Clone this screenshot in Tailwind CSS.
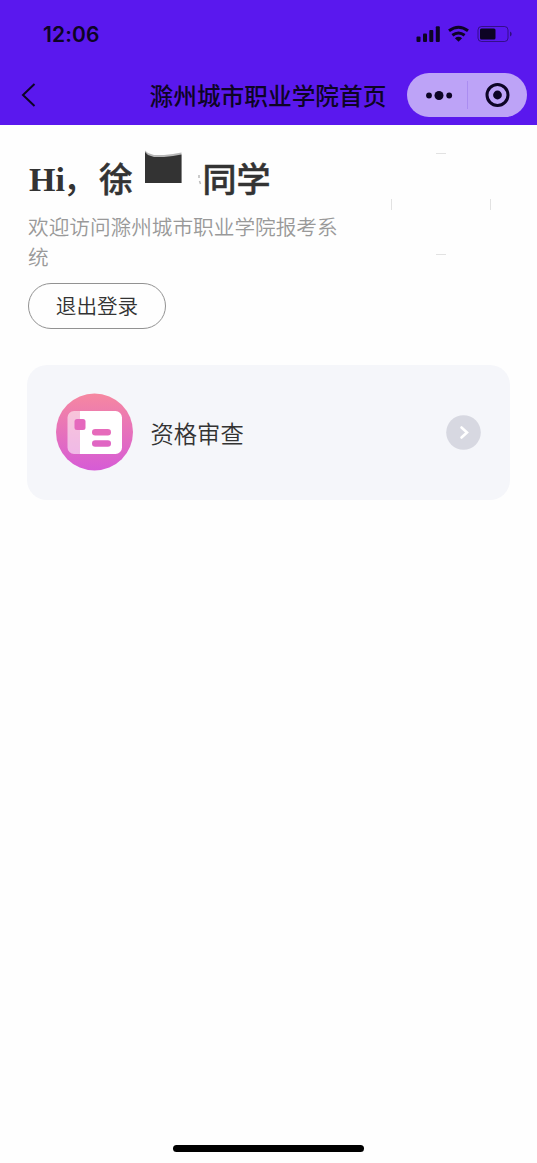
<!DOCTYPE html>
<html lang="zh-CN">
<head>
<meta charset="utf-8">
<meta name="viewport" content="width=device-width, initial-scale=1">
<title>滁州城市职业学院首页</title>
<script src="https://cdn.jsdelivr.net/npm/@tailwindcss/browser@4"></script>
</head>
<body class="bg-[#fefefe] font-['Noto_Sans_CJK_SC',sans-serif] text-[#333333]">
<div class="flex h-[1163px] w-[537px] flex-col overflow-hidden">
  <header class="h-[125px] shrink-0 bg-[#5a18ee] text-[#0d0425]">
    <div class="flex h-[68px] items-center justify-between pl-[43px] pr-[24px]">
      <span class="pt-px font-['Inter',sans-serif] text-[21px] leading-none font-semibold tracking-[0.1px]">12:06</span>
      <svg class="h-[20px] w-[98px]" viewBox="415 24 98 20" fill="none">
        <g fill="#0d0425">
          <rect x="416.500" y="36.500" width="4" height="5.500" rx="1"/>
          <rect x="423" y="33.500" width="4" height="8.500" rx="1"/>
          <rect x="429.300" y="30" width="4" height="12" rx="1"/>
          <rect x="435.800" y="26.300" width="4" height="15.700" rx="1"/>
          <path d="M458.500 41.700l-3.600-3.500q3.600-2.700 7.200 0z"/>
          <rect x="480" y="28.500" width="15.500" height="11" rx="1.500"/>
          <path d="M510 31.500q1.700.8 1.700 2.500t-1.700 2.500z" fill-opacity=".55"/>
        </g>
        <path d="M449 30.800q9.500-7.200 19 0M452.400 35.300q6.100-4.600 12.200 0" stroke="#0d0425" stroke-width="3"/>
        <rect x="478" y="26.500" width="30" height="15" rx="3.500" stroke="#0d0425" stroke-opacity=".5"/>
      </svg>
    </div>
    <div class="flex h-[54px] items-center pr-[10px] pl-[21px]">
      <svg class="h-[26px] w-[16px] shrink-0" viewBox="0 0 16 26" fill="none" stroke="#0d0425" stroke-width="2"><path d="M13.500 2L2 13l11.500 11"/></svg>
      <h1 class="ml-[112.500px] w-[240px] shrink-0 pt-[2px] text-[23.7px] leading-none font-medium whitespace-nowrap">滁州城市职业学院首页</h1>
      <div class="ml-auto flex h-[44px] w-[120px] shrink-0 items-center rounded-full bg-[#bda3f7]">
        <svg class="h-[44px] w-[120px]" viewBox="0 0 120 44" fill="#0d0425">
          <circle cx="22" cy="22.500" r="2.900"/><circle cx="32" cy="22.500" r="4.500"/><circle cx="42.200" cy="22.500" r="2.900"/>
          <path d="M60.500 8v28" stroke="#aa8df0"/>
          <circle cx="90.500" cy="22" r="10.500" fill="none" stroke="#0d0425" stroke-width="3"/><circle cx="90.500" cy="22" r="4.400"/>
        </svg>
      </div>
    </div>
  </header>

  <main class="px-[27px] pt-[24px]">
    <section class="flex h-[216px]">
      <div class="w-[330px] shrink-0 pl-[1px]">
        <h2 class="flex h-[57px] items-center pl-[1px] text-[34px] leading-none font-medium whitespace-nowrap">
          <span class="pt-[4px] font-['Liberation_Serif','Noto_Sans_CJK_SC',serif] font-bold">Hi</span><span class="-ml-[2px] w-[36px]">，</span><span class="[-webkit-text-stroke:0.5px_#333333]">徐</span>
          <svg class="ml-[10px] h-[57px] w-[61px] shrink-0" viewBox="143 149 61 57">
            <path d="M145 150.500l3 2.500 6 2h10l9-1 8.500-1.500V183H145z" fill="#333" fill-opacity=".35"/>
            <path d="M145 152l3 3 6 2h10l9-1 8.500-1.500V183H145z" fill="#333"/>
            <path d="M199 175v3M199.500 181l1 3" stroke="#bbb" stroke-width="1.500"/>
          </svg>
          <span class="-ml-[1.500px] [-webkit-text-stroke:0.5px_#333333]">同学</span>
        </h2>
        <p class="mt-[5px] w-[312px] text-[20.65px] leading-[30px] font-[350] text-[#999999]">欢迎访问滁州城市职业学院报考系统</p>
        <button class="mt-[12px] flex h-[46px] w-[138px] items-center justify-center rounded-full border-[1.500px] border-[#929292] pb-[2px] text-[20.6px] leading-none font-[350]">退出登录</button>
      </div>
      <svg class="mt-px ml-[33px] h-[105px] w-[102px]" viewBox="390 150 102 105" fill="none" stroke="#e2e2e2">
        <path d="M436 153.500h10M436 254.500h10M391.500 199v11M490.500 199v11"/>
      </svg>
    </section>

    <section class="flex h-[135px] w-[483px] items-center rounded-[20px] bg-[#f5f6fa] pr-[29px] pl-[29px]">
      <svg class="mb-px h-[78px] w-[78px] shrink-0" viewBox="0 0 78 78">
        <defs><linearGradient id="pink" x1="0" y1="0" x2="0" y2="1"><stop offset="0" stop-color="#f688a0"/><stop offset="1" stop-color="#d65bd6"/></linearGradient></defs>
        <circle cx="38.500" cy="39" r="38.500" fill="url(#pink)"/>
        <path d="M18 18H24v43H18a6.500 6.500 0 0 1-6.500-6.500v-30A6.500 6.500 0 0 1 18 18z" fill="#fff" fill-opacity=".55"/>
        <path d="M24 18H59.500a6.500 6.500 0 0 1 6.500 6.500v30a6.500 6.500 0 0 1-6.500 6.500H24z" fill="#fff"/>
        <rect x="18.500" y="26" width="11" height="11" rx="2.500" fill="#e568bd"/>
        <rect x="36" y="36" width="19" height="6.500" rx="3.200" fill="#e66abb"/>
        <rect x="36" y="47.300" width="19" height="6.500" rx="3.200" fill="#e065c3"/>
      </svg>
      <span class="ml-[16.500px] pt-[2px] text-[23.3px] leading-none font-[350]">资格审查</span>
      <svg class="ml-auto h-[35px] w-[35px]" viewBox="0 0 35 35" fill="none"><circle cx="17.500" cy="17.500" r="17.300" fill="#d7d8e1"/><path d="M15.500 12.500l5.500 5-5.500 5" stroke="#fff" stroke-width="2.600" stroke-linecap="round"/></svg>
    </section>
  </main>

  <div class="mx-auto mt-auto mb-[11px] h-[7px] w-[191px] rounded-full bg-black"></div>
</div>
</body>
</html>
